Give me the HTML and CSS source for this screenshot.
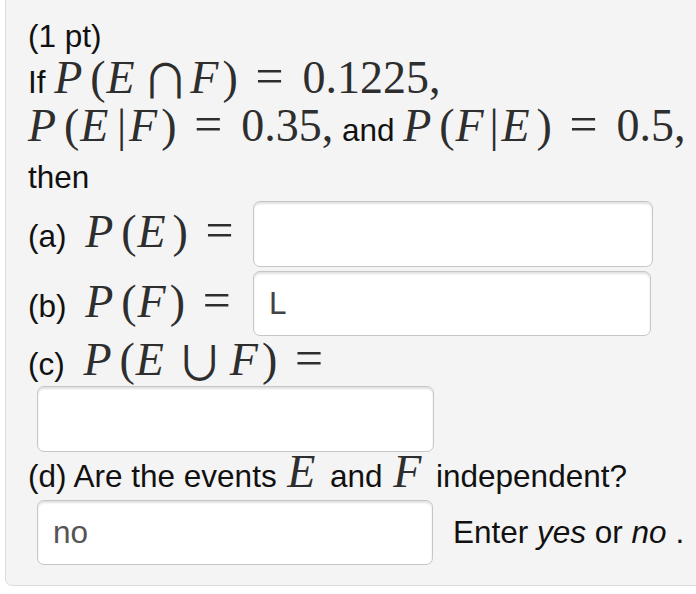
FILE: index.html
```html
<!DOCTYPE html>
<html>
<head>
<meta charset="utf-8">
<link rel="stylesheet" href="styles.css">
</head>
<body>
<div class="panel">
  <div class="line l1">(1 pt)</div>
  <div class="line l2">If <span class="m"><i class="P">P</i><span class="pl">(</span><i class="E">E</i><span class="bin">∩</span><i class="F">F</i><span class="pr">)</span><span class="rel">=</span>0.1225,</span></div>
  <div class="line l3"><span class="m"><i class="P">P</i><span class="pl">(</span><i class="E">E</i><span class="bar">|</span><i class="F">F</i><span class="pr">)</span><span class="rel">=</span>0.35,</span> and <span class="m"><i class="P">P</i><span class="pl">(</span><i class="F">F</i><span class="bar">|</span><i class="E">E</i><span class="pr">)</span><span class="rel">=</span>0.5,</span></div>
  <div class="line l4">then</div>
  <div class="row ra">
    <span class="lbl">(a) <span class="m ml"><i class="P">P</i><span class="pl">(</span><i class="E">E</i><span class="pr">)</span><span class="rel">=</span></span></span>
    <input class="box box-a" type="text" value="">
  </div>
  <div class="row rb">
    <span class="lbl">(b) <span class="m ml"><i class="P">P</i><span class="pl">(</span><i class="F">F</i><span class="pr">)</span><span class="rel">=</span></span></span>
    <input class="box box-b" type="text" value="L">
  </div>
  <div class="line lc">(c) <span class="m ml"><i class="P">P</i><span class="pl">(</span><i class="E">E</i><span class="bin cup">∪</span><i class="F">F</i><span class="pr">)</span><span class="rel">=</span></span></div>
  <input class="box box-c" type="text" value="">
  <div class="line ld">(d) Are the events <span class="m"><i class="dv">E</i></span> and <span class="m"><i class="dv">F</i></span> independent?</div>
  <div class="row rd">
    <input class="box box-d" type="text" value="no">
    <span class="hint">Enter <em>yes</em> or <em>no</em> .</span>
  </div>
</div>
</body>
</html>
```

FILE: styles.css
```css
html, body {
  margin: 0;
  padding: 0;
  background: #ffffff;
  overflow: hidden;
}

body {
  font-family: "Liberation Sans", Arial, sans-serif;
  font-size: 31.5px;
  color: #111111;
}

.panel {
  margin: -10px 0 0 5px;
  width: 730px;
  box-sizing: border-box;
  padding: 23px 0 20px 22px;
  background: #f4f4f4;
  border: 1px solid #dcdcdc;
  border-radius: 7px;
  display: flex;
  flex-direction: column;
  align-items: flex-start;
}

.line {
  white-space: nowrap;
}

.l1 { line-height: 44px; }
.l2 { line-height: 48px; }
.l3 { line-height: 48px; }
.l4 { line-height: 47px; }

.m {
  font-family: "Liberation Serif", "DejaVu Serif", serif;
  font-size: 46px;
  line-height: 0;
  color: #2e2e2e;
  white-space: nowrap;
}

.m i { font-style: italic; }
.m .P { padding-right: 0.15em; }
.m .E { padding-right: 0.13em; }
.m .F { padding-right: 0.07em; }
.m .dv { padding: 0 0.13em 0 0.04em; }
.pl, .pr { margin: 0 0.02em; }

.rel {
  font-size: 1.08em;
  margin: 0 0.38em 0 0.34em;
}
.bar { margin: 0 0.06em; }
.bin {
  font-family: "Noto Sans CJK JP", "DejaVu Sans", sans-serif;
  font-weight: 400;
  font-size: 1.02em;
  vertical-align: -0.1em;
  margin: 0 0.03em;
}
.bin.cup { margin: 0 0.14em; }

.ml { margin-left: 10px; }

.row {
  display: flex;
  align-items: center;
}

.lbl {
  flex: 0 0 225px;
  min-width: 0;
  line-height: 36px;
  padding-top: 4px;
  white-space: nowrap;
}

.ra { height: 66px; }
.rb { height: 65px; margin-top: 4px; }

.box {
  box-sizing: border-box;
  background: #ffffff;
  border: 1px solid #c6c6c6;
  border-radius: 7px;
  box-shadow: inset 0 2px 2px rgba(0, 0, 0, 0.12);
  font-family: "Liberation Sans", Arial, sans-serif;
  font-size: 31.5px;
  color: #444444;
  padding: 0 15px;
  margin: 0;
  outline: none;
}

.box-a { width: 400px; height: 66px; }
.box-b { width: 398px; height: 65px; }
.box-c { width: 397px; height: 66px; margin-left: 9px; }
.box-d { width: 396px; height: 65px; margin-left: 9px; color: #555555; }

.lc {
  padding-top: 7px;
  line-height: 43px;
}

.ld {
  padding-top: 1px;
  line-height: 47px;
}

.rd { height: 65px; }

.hint {
  margin-left: 20px;
  white-space: nowrap;
}
.hint em { font-style: italic; }
```
